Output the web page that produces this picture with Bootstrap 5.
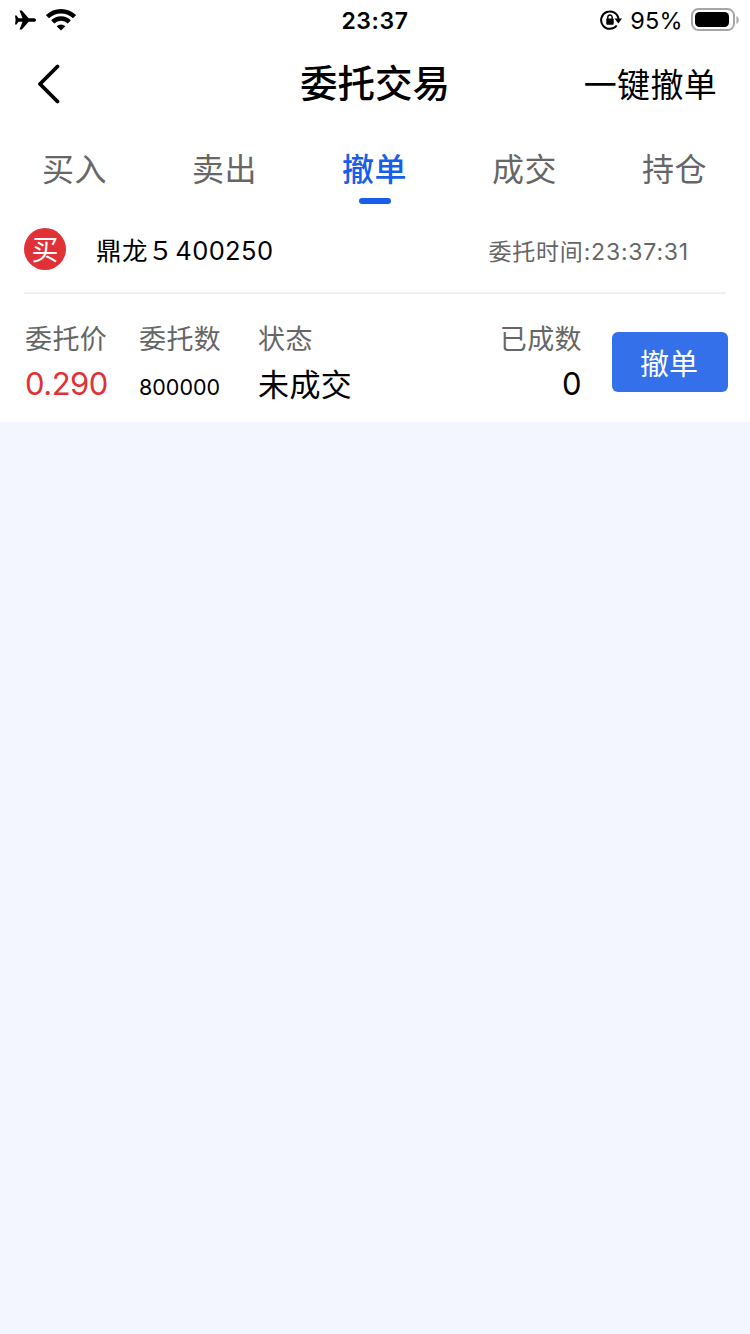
<!DOCTYPE html>
<html lang="zh-CN">
<head>
<meta charset="utf-8">
<meta name="viewport" content="width=device-width, initial-scale=1">
<title>委托交易</title>
<link href="https://cdn.jsdelivr.net/npm/bootstrap@5.3.0/dist/css/bootstrap.min.css" rel="stylesheet">
<style>
  body { font-family: Inter, "Noto Sans CJK SC", sans-serif; background: #f3f6ff; color: #000; min-height: 100vh; }
  svg { display: block; flex: none; }
  .status-bar { height: 40px; padding: 0 11px 0 14px; font-size: 24px; line-height: 40px; }
  .status-bar > div { flex: 1 1 0; }
  .wifi { margin-left: 9px; }
  .clock { font-size: 23px; font-weight: 600; letter-spacing: .6px; padding: 2px 3px 0 0; }
  .battery-text { font-size: 23.5px; letter-spacing: .3px; padding-top: 2px; }
  .title-bar { height: 88px; padding: 0 33px 0 36px; }
  .title-bar > div { flex: 1 1 0; }
  .title-bar h1 { font-size: 37.5px; font-weight: 500; line-height: 84px; padding: 0 3px 0 0; }
  .cancel-all { font-size: 33px; line-height: 88px; letter-spacing: .3px; padding-top: 2px; }
  .trade-tabs { height: 84px; }
  .trade-tabs .nav-link { color: #666; font-size: 32px; line-height: 48px; padding: 18px 1px 0 0; letter-spacing: .5px; }
  .trade-tabs .nav-link.active { color: #175ee9; font-weight: 500; }
  .trade-tabs .nav-link.active::after { content: ""; display: block; width: 32px; height: 6px; border-radius: 3px; background: #175ee9; margin: 4px auto 0; }
  .order-head { height: 82px; margin: 0 24px; border-bottom: 2px solid #f0f0f0; padding: 0 37px 6px 0; }
  .side-mark { width: 42px; height: 42px; background: #e13137; color: #fff; font-size: 27px; line-height: 45px; margin-right: 30px; }
  .order-name { font-size: 25.5px; line-height: 36px; padding-top: 4px; letter-spacing: .4px; word-spacing: -6px; }
  .order-time { font-size: 23px; color: #666; line-height: 36px; padding-top: 6px; letter-spacing: .8px; }
  .order-body { height: 128px; padding: 23px 22px 0 24px; }
  .field-label { color: #666; font-size: 27px; line-height: 46px; letter-spacing: .4px; }
  .field-value { font-size: 31px; line-height: 44px; letter-spacing: .4px; }
  .field-value.number { line-height: 42px; }
  .col-price { width: 114px; padding-left: 1px; }
  .col-count { width: 120px; padding-left: 1px; }
  .col-done { padding-right: 30px; }
  .price-up { color: #e13137; letter-spacing: -.5px; }
  .qty { font-size: 21.5px; padding-top: 2px; line-height: 44px; }
  .btn-revoke { width: 116px; height: 60px; margin-top: 15px; background: #3370e9; color: #fff; border-radius: 6px; font-size: 29px; line-height: 60px; }
  .btn-revoke span { display: block; padding: 3px 2px 0 0; }
</style>
</head>
<body>
<div class="bg-white">
  <header>
    <div class="status-bar d-flex align-items-center">
      <div class="d-flex align-items-center">
        <svg width="23" height="20" viewBox="0 0 23 20"><path d="M22 10c0 1.100-.9 1.800-2.100 1.800h-5.200L7.800 19.600H5.500l3-7.800H4.500L2.500 14.500H1l.6-4.500L1 5.500h1.500l2 2.700h4L5.500.4h2.300l6.900 7.800h5.200C21.100 8.200 22 8.900 22 10z"/></svg>
        <svg class="wifi" width="30" height="22" viewBox="0 0 30 22"><g fill="none" stroke="#000" stroke-width="4.400"><path d="M1.500 7.700a19.400 19.400 0 0 1 27 0"/><path d="M6.700 12.900a12 12 0 0 1 16.600 0"/></g><path d="M15 21.500l-4.300-4.300a6.200 6.200 0 0 1 8.600 0z"/></svg>
      </div>
      <span class="clock">23:37</span>
      <div class="d-flex align-items-center justify-content-end">
        <svg width="22" height="20" viewBox="0 0 22 20"><g fill="none" stroke="#000" stroke-width="2"><path d="M18.500 9.200A8.700 8.700 0 1 0 16.700 15.500"/><path d="M7.800 9V7.200a2.200 2.200 0 0 1 4.400 0V9" stroke-width="1.400"/></g><path d="M14.500 8.500h7.500l-3.700 5z"/><rect x="6.300" y="8.500" width="7.400" height="6.300" rx=".8"/></svg>
        <span class="battery-text ms-2">95%</span>
        <svg width="48" height="24" viewBox="0 0 48 24" class="ms-2"><rect x="1" y="1" width="42" height="21" rx="6.500" fill="none" stroke="#a6a6a6" stroke-width="2"/><rect x="4" y="4" width="34" height="15" rx="4.500"/><path d="M45.500 8v8c3-1.500 3-6.500 0-8z" fill="#a6a6a6"/></svg>
      </div>
    </div>
    <div class="title-bar d-flex align-items-center">
      <div>
        <svg width="26" height="40" viewBox="0 0 26 40" fill="none" stroke="#000" stroke-width="3.800" stroke-linecap="round" stroke-linejoin="round"><path d="M21.500 2.500L4 20l17.500 17.500"/></svg>
      </div>
      <h1 class="m-0">委托交易</h1>
      <div class="cancel-all text-end text-nowrap">一键撤单</div>
    </div>
    <nav class="trade-tabs nav nav-fill flex-nowrap">
      <a class="nav-link w-100" href="#">买入</a>
      <a class="nav-link w-100" href="#">卖出</a>
      <a class="nav-link w-100 active" href="#" aria-current="page">撤单</a>
      <a class="nav-link w-100" href="#">成交</a>
      <a class="nav-link w-100" href="#">持仓</a>
    </nav>
  </header>
  <main>
    <div class="order-head d-flex align-items-center">
      <span class="side-mark rounded-circle text-center">买</span>
      <span class="order-name">鼎龙５ 400250</span>
      <span class="order-time ms-auto">委托时间:23:37:31</span>
    </div>
    <div class="order-body d-flex align-items-start">
      <div class="col-price">
        <div class="field-label">委托价</div>
        <div class="field-value number price-up">0.290</div>
      </div>
      <div class="col-count">
        <div class="field-label">委托数</div>
        <div class="qty">800000</div>
      </div>
      <div>
        <div class="field-label">状态</div>
        <div class="field-value">未成交</div>
      </div>
      <div class="col-done ms-auto text-end">
        <div class="field-label">已成数</div>
        <div class="field-value number">0</div>
      </div>
      <button type="button" class="btn btn-revoke border-0 p-0"><span>撤单</span></button>
    </div>
  </main>
</div>
<script src="https://cdn.jsdelivr.net/npm/bootstrap@5.3.0/dist/js/bootstrap.bundle.min.js"></script>
</body>
</html>
